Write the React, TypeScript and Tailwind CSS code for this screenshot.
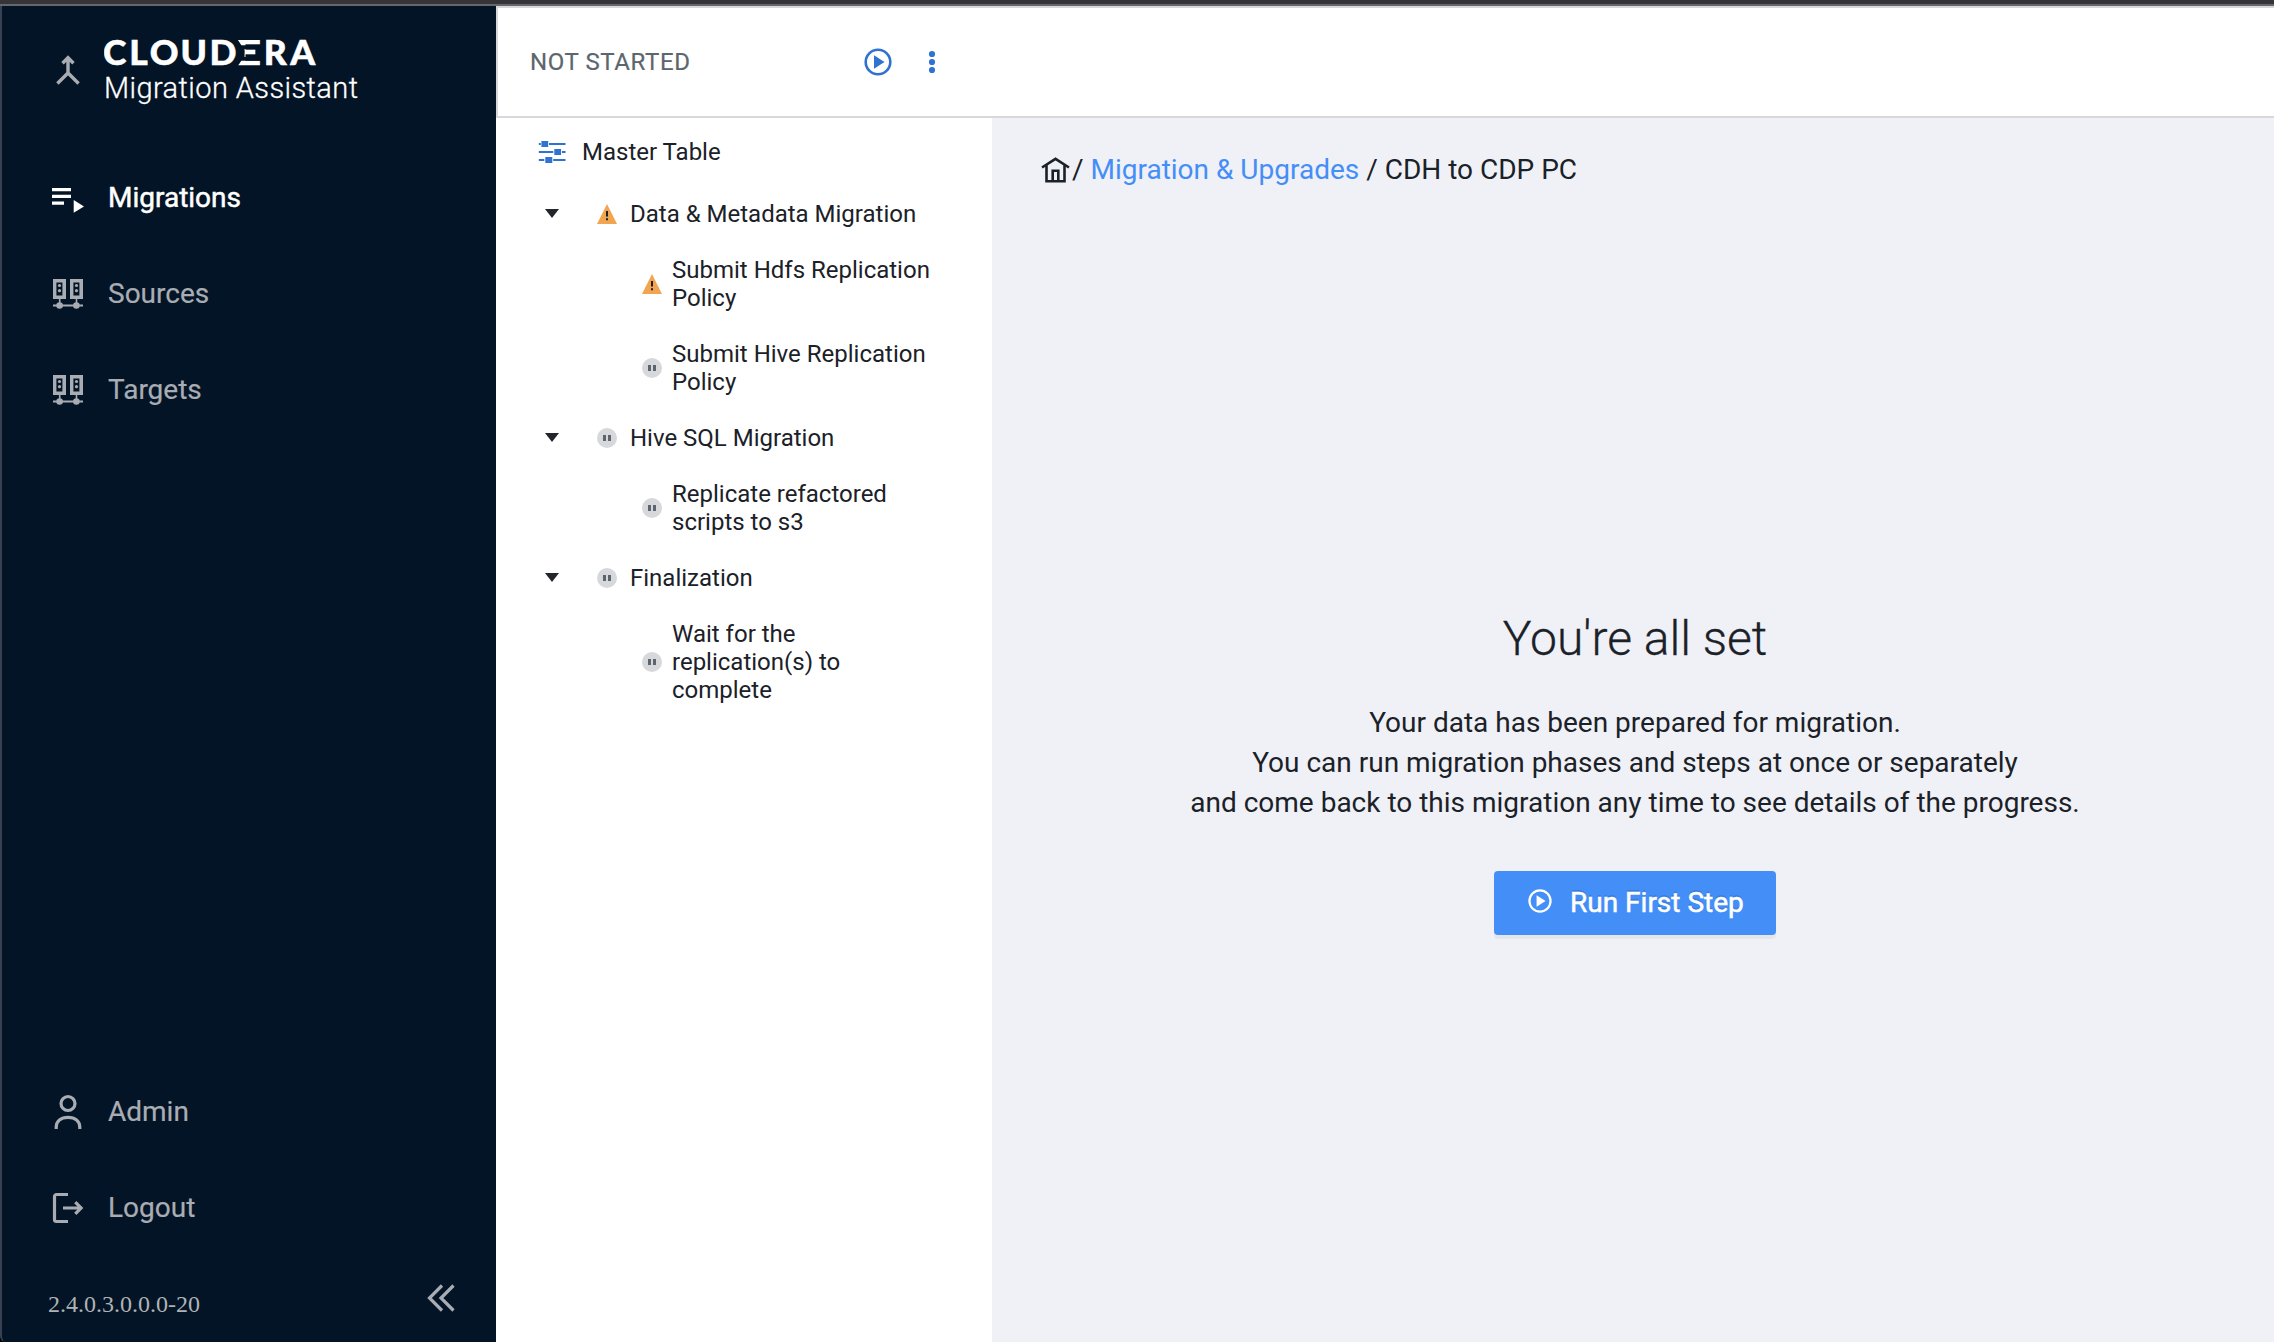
import type { ReactNode } from 'react';

function Wordmark() {
  return (
    <svg width="220" height="44" viewBox="0 0 220 44" fill="#fff" stroke="#fff" strokeWidth=".5" role="img" aria-label="Cloudera" className="block">
      <defs>
        <clipPath id="barred">
          <path d="M134 10h24v5.200h-20.700zM140.600 19h10.700v8h-10.700zM137.300 30.800H158v5h-24z" />
        </clipPath>
      </defs>
      <g fontFamily="Lato" fontWeight="900" fontSize="33.500">
        <text x="-0.900 23.900 43.200 72.200 99.600" y="35" transform="scale(1.060 1)">CLOUD</text>
        <g clipPath="url(#barred)">
          <text x="0" y="35" transform="translate(130.200 0) scale(1.400 1)">E</text>
        </g>
        <text x="150.800 175.700" y="35" transform="scale(1.060 1)">RA</text>
      </g>
    </svg>
  );
}

function MergeIcon() {
  return (
    <svg width="24" height="32" viewBox="0 0 24 32" fill="none" stroke="#a9adb3" strokeWidth="3.400">
      <path d="M12 18V3M6.500 8.200L12 2.700l5.500 5.500M1.400 28.500L12 18l10.600 10.500" />
    </svg>
  );
}

function QueueIcon() {
  return (
    <svg width="34" height="28" viewBox="0 0 34 28" fill="#fff" className="translate-x-px translate-y-[3px]">
      <path d="M0 1h19v3.200H0zM0 7.700h19v3.200H0zM0 14.500h12v3.200H0zM21.700 13l10.300 6.400-10.300 6.400z" />
    </svg>
  );
}

function ServersIcon() {
  return (
    <svg width="32" height="32" viewBox="0 0 32 32" fill="#a9adb3">
      <path fillRule="evenodd" d="M1 1h13v20H1zM4.400 4.400v13.200h6V4.400zM18 1h13v20H18zM21.400 4.400v13.200h6V4.400z" />
      <path d="M6.900 20h1.600v7H6.900zM23.700 20h1.600v7h-1.600zM1 26.600h30v1.800H1z" />
      <circle cx="7.500" cy="7.500" r="1.600" />
      <circle cx="7.500" cy="12.700" r="1.600" />
      <circle cx="24.500" cy="7.500" r="1.600" />
      <circle cx="24.500" cy="12.700" r="1.600" />
      <circle cx="7.600" cy="27.500" r="3.300" />
      <circle cx="24.400" cy="27.500" r="3.300" />
    </svg>
  );
}

function UserIcon() {
  return (
    <svg width="28" height="36" viewBox="0 0 28 36" fill="none" stroke="#a9adb3" strokeWidth="3.200">
      <circle cx="14" cy="9.500" r="7" />
      <path d="M2.200 35v-1.500C2.200 27 7 23.300 14 23.300s11.800 3.700 11.800 10.200V35" />
    </svg>
  );
}

function LogoutIcon() {
  return (
    <svg width="32" height="32" viewBox="0 0 32 32" fill="none" stroke="#a9adb3" strokeWidth="3.200">
      <path d="M16 2.500H4.500a2 2 0 0 0-2 2v23a2 2 0 0 0 2 2H16M11 16h18M23.300 10.200l5.800 5.800-5.800 5.800" />
    </svg>
  );
}

function PlayCircle({ size, color, width }: { size: number; color: string; width: number }) {
  return (
    <svg width={size} height={size} viewBox="0 0 28 28">
      <circle cx="14" cy="14" r="12.300" fill="none" stroke={color} strokeWidth={width} />
      <path d="M10 7.300L20.500 14 10 20.700z" fill={color} />
    </svg>
  );
}

function SlidersIcon() {
  return (
    <svg width="28" height="24" viewBox="0 0 28 24" fill="#2f72d0">
      <path d="M.8 3h2v2h-2zM11 3h16.500v2H11zM3.400 1h6.800v6H3.400zM.8 11h14.500v2H.8zM24 11h3.500v2H24zM16.300 9h6.800v6h-6.800zM.8 19h5.500v2H.8zM15.200 19h12.300v2H15.200zM7.300 17h7v6h-7z" />
    </svg>
  );
}

function Status({ kind }: { kind: 'warning' | 'pending' }) {
  return kind === 'warning' ? (
    <svg width="20" height="20" viewBox="0 0 20 20" className="shrink-0">
      <path d="M10 0l10 20H0z" fill="#f2a550" />
      <path d="M9 7h2v5.500H9zM9 14.200h2v2H9z" fill="#1b2128" />
    </svg>
  ) : (
    <svg width="20" height="20" viewBox="0 0 20 20" className="shrink-0">
      <circle cx="10" cy="10" r="10" fill="#d7d8dc" />
      <path d="M6 7h3v6H6zM11 7h3v6h-3z" fill="#5a656d" />
    </svg>
  );
}

function NavItem({ icon, label, active = false }: { icon: ReactNode; label: string; active?: boolean }) {
  return (
    <a className={`flex h-24 items-center text-[28px] ${active ? 'text-white [-webkit-text-stroke:0.5px_white]' : 'text-[#a9adb3] [-webkit-text-stroke:0.2px_#a9adb3]'}`}>
      <span className="mr-[23px] flex w-[34px] justify-center">{icon}</span>
      {label}
    </a>
  );
}

function Phase({ label, kind, children }: { label: string; kind: 'warning' | 'pending'; children: ReactNode }) {
  return (
    <section>
      <div className="flex h-14 items-center">
        <svg width="14" height="9" viewBox="0 0 14 9" className="mr-[38px] -translate-y-px">
          <path d="M0 0h14L7 9z" fill="#22262a" />
        </svg>
        <Status kind={kind} />
        <span className="ml-[13px]">{label}</span>
      </div>
      {children}
    </section>
  );
}

function Step({ label, kind }: { label: string; kind: 'warning' | 'pending' }) {
  return (
    <div className="flex items-center py-3.5 pl-[97px]">
      <Status kind={kind} />
      <span className="ml-2.5 w-[266px]">{label}</span>
    </div>
  );
}

export default function App() {
  return (
    <div className="flex h-[1342px] w-[2274px] flex-col overflow-hidden bg-white font-[Roboto,sans-serif] text-[#1b2128]">
      <div className="h-1.5 shrink-0 border-b-2 border-[#66676b] bg-[#353539]" />
      <div className="flex min-h-0 flex-1">
        <div className="flex w-[496px] shrink-0 bg-black">
          <aside className="flex flex-1 flex-col rounded-bl-md border-l-2 border-[#364251] bg-[#021425]">
            <div className="flex h-[144px] pl-[54px] pt-[24px]">
              <div className="pt-[25px]"><MergeIcon /></div>
              <div className="ml-[24px]">
                <Wordmark />
                <div className="-mt-[3px] text-[29px] leading-[34px] font-light tracking-[0.42px] text-white [-webkit-text-stroke:0.3px_white]">Migration Assistant</div>
              </div>
            </div>
            <nav className="pl-[49px]">
              <NavItem icon={<QueueIcon />} label="Migrations" active />
              <NavItem icon={<ServersIcon />} label="Sources" />
              <NavItem icon={<ServersIcon />} label="Targets" />
            </nav>
            <nav className="mt-auto pl-[49px]">
              <NavItem icon={<UserIcon />} label="Admin" />
              <NavItem icon={<LogoutIcon />} label="Logout" />
            </nav>
            <div className="flex h-[86px] justify-between pl-[46px] pr-[41px]">
              <span className="pt-[34px] font-['Liberation_Serif',serif] text-2xl leading-7 text-[#b0b2b5]">2.4.0.3.0.0.0-20</span>
              <svg width="28" height="28" viewBox="0 0 28 28" fill="none" stroke="#a9adb3" strokeWidth="3.200" className="mt-[28px]">
                <path d="M15 1.500L2.500 14 15 26.500M26.500 1.500L14 14l12.500 12.500" />
              </svg>
            </div>
          </aside>
        </div>
        <div className="flex min-w-0 flex-1 flex-col">
          <header className="flex h-28 shrink-0 items-center border-2 border-r-0 border-[#d7d7dc] pl-8">
            <span className="w-[334px] text-2xl tracking-[0.6px] text-[#5c666e] [-webkit-text-stroke:0.2px_#5c666e]">NOT STARTED</span>
            <PlayCircle size={28} color="#2f72d0" width={2.6} />
            <svg width="8" height="24" viewBox="0 0 8 24" fill="#2f72d0" className="ml-[36px]">
              <circle cx="4" cy="4" r="3.100" />
              <circle cx="4" cy="12" r="3.100" />
              <circle cx="4" cy="20" r="3.100" />
            </svg>
          </header>
          <div className="flex min-h-0 flex-1">
            <div className="w-[496px] shrink-0 bg-white pl-[49px] text-2xl leading-7">
              <div className="-ml-[7px] mb-px flex h-[67px] items-center">
                <SlidersIcon />
                <span className="ml-4">Master Table</span>
              </div>
              <Phase label="Data & Metadata Migration" kind="warning">
                <Step label="Submit Hdfs Replication Policy" kind="warning" />
                <Step label="Submit Hive Replication Policy" kind="pending" />
              </Phase>
              <Phase label="Hive SQL Migration" kind="pending">
                <Step label="Replicate refactored scripts to s3" kind="pending" />
              </Phase>
              <Phase label="Finalization" kind="pending">
                <Step label="Wait for the replication(s) to complete" kind="pending" />
              </Phase>
            </div>
            <main className="flex flex-1 flex-col bg-[#f0f1f6] text-[28px] leading-10">
              <div className="flex items-center whitespace-pre pl-[49px] pt-[32px]">
                <svg width="29" height="26" viewBox="0 0 29 26" fill="none" stroke="#1b2128" strokeWidth="2.600" className="mr-0.5">
                  <path d="M1 10.500L14.500 1.800 28 10.500M5.500 8.500v15.700h18V8.500M11.700 24V13.800h5.600V24" />
                </svg>
                <span>/ <a className="text-[#448ef7]">Migration &amp; Upgrades</a> / CDH to CDP PC</span>
              </div>
              <div className="mt-[419px] flex flex-col items-center pl-1 text-center">
                <h1 className="text-[48px] leading-[60px] font-light [-webkit-text-stroke:0.3px_#1b2128]">You're all set</h1>
                <p className="mt-[34px]">
                  Your data has been prepared for migration.<br />
                  You can run migration phases and steps at once or separately<br />
                  and come back to this migration any time to see details of the progress.
                </p>
                <button className="mt-[48px] flex h-16 w-[282px] items-center rounded-[4px] bg-[#448ef7] pl-[34px] text-white shadow-[0_4px_0_rgba(0,0,0,0.045)] [-webkit-text-stroke:0.5px_white] [text-shadow:0_-2px_0_rgba(0,0,0,0.12)]">
                  <span className="-mt-1"><PlayCircle size={24} color="#fff" width={2.6} /></span>
                  <span className="ml-[18px]">Run First Step</span>
                </button>
              </div>
            </main>
          </div>
        </div>
      </div>
    </div>
  );
}
